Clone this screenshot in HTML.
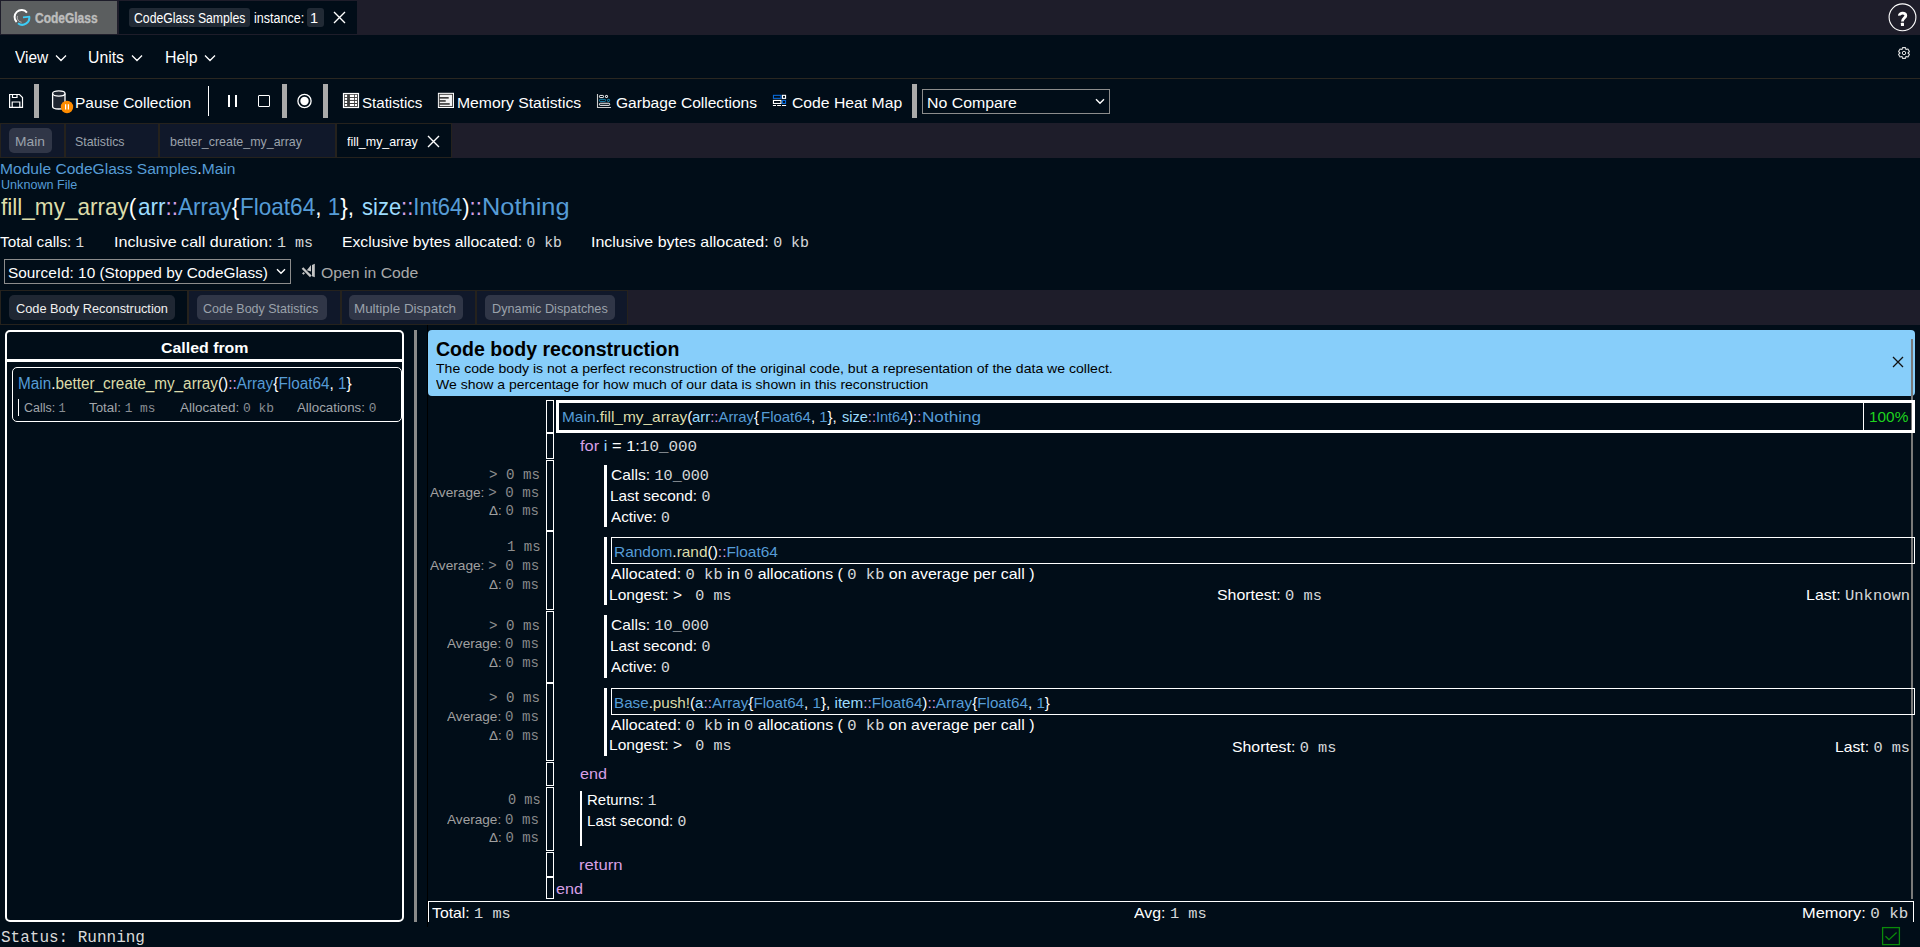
<!DOCTYPE html>
<html><head><meta charset="utf-8"><style>
*{box-sizing:border-box;margin:0;padding:0}
html,body{width:1920px;height:947px;overflow:hidden;background:#010d18;font-family:'Liberation Sans',sans-serif;color:#fff}
.a{position:absolute}
.t{position:absolute;white-space:pre;line-height:0;transform-origin:0 0}
.m{font-family:'Liberation Mono',monospace;opacity:.84}
</style></head><body>
<!-- title bar -->
<div class="a" style="left:0;top:0;width:1920px;height:35px;background:#1e1d2a"></div>
<div class="a" style="left:1px;top:1px;width:116px;height:33px;background:#5b5e5f"></div>
<svg class="a" style="left:12px;top:7px" width="20" height="20" viewBox="0 0 20 20"><path d="M14.95 5.55 A7 7 0 1 0 4.64 15" fill="none" stroke="#fff" stroke-width="2"/><path d="M5.49 8.86 A4.8 4.8 0 0 0 9.58 15.28" fill="none" stroke="#bbb" stroke-width="0.9"/><path d="M5.98 16.23 A7 7 0 0 0 17.2 9.5" fill="none" stroke="#3ccdf7" stroke-width="2"/><path d="M11 10.3 L18 9.6" stroke="#3ccdf7" stroke-width="1.8"/></svg>
<div class="a" style="left:119px;top:1px;width:238px;height:33px;background:#010d18"></div>
<div class="a" style="left:129px;top:8px;width:121px;height:19px;background:#212a35;border-radius:3px"></div>
<div class="a" style="left:307px;top:8px;width:17px;height:19px;background:#212a35;border-radius:3px"></div>
<svg class="a" style="left:333px;top:11px" width="13" height="13" viewBox="0 0 13 13"><path d="M1 1L12 12M12 1L1 12" stroke="#fff" stroke-width="1.4"/></svg>
<svg class="a" style="left:1887px;top:2px" width="31" height="31" viewBox="0 0 31 31"><circle cx="15.5" cy="15.3" r="13.4" fill="none" stroke="#fff" stroke-width="1.1"/><path d="M12.4 13.6C12.2 10.7 19 10.1 18.8 13.6C18.7 15.9 15.4 16.3 15.4 19.4" fill="none" stroke="#fff" stroke-width="2.8"/><rect x="13.9" y="20.7" width="3.1" height="3.2" rx="0.5" fill="#fff"/></svg>
<!-- menu -->
<div class="a" style="left:0;top:35px;width:1920px;height:43px;background:#010d18"></div>
<div class="a" style="left:0;top:78px;width:1920px;height:1px;background:#2a2721"></div>
<svg class="a" style="left:0;top:50px" width="220" height="16" viewBox="0 0 220 16"><path d="M56 5.5L61 10.5L66 5.5M132 5.5L137 10.5L142 5.5M205 5.5L210 10.5L215 5.5" fill="none" stroke="#fff" stroke-width="1.3"/></svg>
<svg class="a" style="left:1896px;top:45px" width="16" height="16" viewBox="0 0 16 16"><path d="M6.00 4.54 L6.55 2.59 L9.45 2.59 L10.00 4.54 L10.00 4.54 L11.96 4.04 L13.41 6.55 L12.00 8.00 L12.00 8.00 L13.41 9.45 L11.96 11.96 L10.00 11.46 L10.00 11.46 L9.45 13.41 L6.55 13.41 L6.00 11.46 L6.00 11.46 L4.04 11.96 L2.59 9.45 L4.00 8.00 L4.00 8.00 L2.59 6.55 L4.04 4.04 L6.00 4.54Z" fill="none" stroke="#e0e0e0" stroke-width="1.1" stroke-linejoin="round"/><circle cx="8" cy="8" r="1.7" fill="none" stroke="#e0e0e0" stroke-width="1"/></svg>
<!-- toolbar -->
<svg class="a" style="left:8px;top:93px" width="16" height="16" viewBox="0 0 16 16"><path d="M1.6 1.5H11.5L14.5 4.5V14.3H1.6Z M4.5 1.5V4.5H9V1.5 M4.2 14.3V9H11.8V14.3" fill="none" stroke="#fff" stroke-width="1.2"/></svg>
<div class="a" style="left:34px;top:84px;width:5px;height:34px;background:#aaaaaa"></div>
<svg class="a" style="left:51px;top:89px" width="24" height="26" viewBox="0 0 24 26"><path d="M1.6 4.5V17.5C1.6 19 4 20 7.8 20C11.5 20 14 19 14 17.5V4.5" fill="#1e2530" stroke="#fff" stroke-width="1.3"/><ellipse cx="7.8" cy="4.5" rx="6.2" ry="2.6" fill="#1e2530" stroke="#fff" stroke-width="1.3"/><circle cx="16" cy="18" r="6.2" fill="#ff8c00"/><path d="M14.6 15.2V20.6M17.4 15.2V20.6" stroke="#fff" stroke-width="1.2"/></svg>
<div class="a" style="left:208px;top:86px;width:1px;height:30px;background:#fff"></div>
<div class="a" style="left:228px;top:95px;width:2px;height:12px;background:#fff"></div>
<div class="a" style="left:235px;top:95px;width:2px;height:12px;background:#fff"></div>
<div class="a" style="left:257.5px;top:95px;width:12.5px;height:12px;border:1.5px solid #fff;border-radius:1px"></div>
<div class="a" style="left:282px;top:84px;width:5px;height:34px;background:#aaaaaa"></div>
<svg class="a" style="left:296px;top:93px" width="17" height="16" viewBox="0 0 17 16"><circle cx="8.5" cy="8" r="6.6" fill="none" stroke="#fff" stroke-width="1.3"/><circle cx="8.5" cy="8" r="4.2" fill="#fff"/></svg>
<div class="a" style="left:323px;top:84px;width:5px;height:34px;background:#aaaaaa"></div>
<svg class="a" style="left:342px;top:92px" width="18" height="17" viewBox="0 0 18 17"><rect x="1.5" y="1.5" width="15" height="14" fill="#3a3a3a" stroke="#fff" stroke-width="1.2"/><rect x="2.8" y="2.8" width="2.3" height="2.2" fill="#fff"/><rect x="7.9" y="2.8" width="4.1" height="2.2" fill="#fff"/><rect x="12.8" y="2.8" width="2.2" height="2.2" fill="#fff"/><rect x="2.8" y="5.9" width="2.3" height="2.0" fill="#fff"/><rect x="7.9" y="5.9" width="4.1" height="2.0" fill="#fff"/><rect x="12.8" y="5.9" width="2.2" height="2.0" fill="#fff"/><rect x="2.8" y="8.9" width="2.3" height="2.1" fill="#fff"/><rect x="7.9" y="8.9" width="4.1" height="2.1" fill="#fff"/><rect x="12.8" y="8.9" width="2.2" height="2.1" fill="#fff"/><rect x="2.8" y="12" width="2.3" height="2.0" fill="#fff"/><rect x="7.9" y="12" width="4.1" height="2.0" fill="#fff"/><rect x="12.8" y="12" width="2.2" height="2.0" fill="#fff"/></svg>
<svg class="a" style="left:437px;top:92px" width="18" height="17" viewBox="0 0 18 17"><rect x="0.9" y="0.8" width="16.1" height="15.2" fill="#fff"/><rect x="2.3" y="2.3" width="13.3" height="12.2" fill="#f2f2f2" stroke="#333" stroke-width="0.9"/><rect x="2.4" y="5.1" width="9.3" height="1.5" fill="#2a2a2a"/><rect x="2.4" y="8.2" width="6.3" height="1.5" fill="#2a2a2a"/><rect x="2.4" y="11.2" width="10.3" height="1.5" fill="#2a2a2a"/></svg>
<svg class="a" style="left:596px;top:93px" width="16" height="16" viewBox="0 0 16 16"><path d="M1.5 1V14.5H15" fill="none" stroke="#ccc" stroke-width="1.1"/><g fill="none" stroke-width="0.95"><rect x="3.45" y="2.45" width="4.1" height="2.1" rx="0.7" stroke="#fff"/><rect x="9.45" y="2.45" width="2.1" height="2.1" rx="0.6" stroke="#fff"/><rect x="3.45" y="6.35" width="6.1" height="2.1" rx="0.7" stroke="#1a8ab4"/><rect x="11.45" y="6.35" width="2.2" height="2.1" rx="0.6" stroke="#1a8ab4"/><rect x="3.45" y="10.25" width="10.2" height="2.1" rx="0.7" stroke="#fff"/></g></svg>
<svg class="a" style="left:772px;top:94px" width="15" height="14" viewBox="0 0 15 14"><g fill="none" stroke-width="1.1"><rect x="1.45" y="1.35" width="7.5" height="3" stroke="#0a6ad8"/><rect x="10.45" y="1.35" width="3.1" height="3" stroke="#fff"/><rect x="1.45" y="6.45" width="7.5" height="3" stroke="#fff"/><rect x="10.45" y="6.45" width="3.1" height="3" stroke="#0a6ad8"/><path d="M0.9 11.5H4M5.1 11.5H8.9M10 11.5H14.1" stroke="#fff"/></g></svg>
<div class="a" style="left:912px;top:84px;width:5px;height:34px;background:#aaaaaa"></div>
<div class="a" style="left:922px;top:89px;width:188px;height:25px;border:1px solid #8c8c8c"></div>
<svg class="a" style="left:1094px;top:97px" width="12" height="9" viewBox="0 0 12 9"><path d="M2 2.2L6 6.2L10 2.2" fill="none" stroke="#fff" stroke-width="1.4"/></svg>
<!-- tab row -->
<div class="a" style="left:0;top:123px;width:1920px;height:35px;background:#1e1d2a"></div>
<div class="a" style="left:0;top:123px;width:452px;height:35px;background:#25221d"></div>
<div class="a" style="left:1px;top:124px;width:63px;height:33px;background:#10182a"></div>
<div class="a" style="left:66px;top:124px;width:92px;height:33px;background:#10182a"></div>
<div class="a" style="left:160px;top:124px;width:175px;height:33px;background:#10182a"></div>
<div class="a" style="left:337px;top:124px;width:114px;height:33px;background:#010d18"></div>
<div class="a" style="left:9px;top:128px;width:43px;height:25px;background:#303647;border-radius:5px"></div>
<svg class="a" style="left:427px;top:135px" width="13" height="13" viewBox="0 0 13 13"><path d="M1 1L12 12M12 1L1 12" stroke="#fff" stroke-width="1.4"/></svg>
<!-- header -->
<div class="a" style="left:3.5px;top:259px;width:287px;height:25px;border:1px solid #8c8c8c"></div>
<svg class="a" style="left:275px;top:267px" width="12" height="9" viewBox="0 0 12 9"><path d="M2 2.2L6 6.2L10 2.2" fill="none" stroke="#fff" stroke-width="1.4"/></svg>
<svg class="a" style="left:301px;top:263px" width="16" height="16" viewBox="0 0 16 16"><path d="M1.5 5 L9.8 13.4" stroke="#c4c4c4" stroke-width="2.3"/><path d="M1 10.5L2.5 9L4 10.3L2.5 11.8Z M5.8 7.2L10 2L10 8.5Z M11 2L13.8 0.8V14.3L11 13.2Z" fill="#c4c4c4"/></svg>
<!-- subtabs -->
<div class="a" style="left:0;top:290px;width:1920px;height:35px;background:#1e1d2a"></div>
<div class="a" style="left:0;top:290px;width:628px;height:35px;background:#25221d"></div>
<div class="a" style="left:1px;top:291px;width:186px;height:33px;background:#010d18"></div>
<div class="a" style="left:189px;top:291px;width:151px;height:33px;background:#10182a"></div>
<div class="a" style="left:342px;top:291px;width:133px;height:33px;background:#10182a"></div>
<div class="a" style="left:477px;top:291px;width:150px;height:33px;background:#10182a"></div>
<div class="a" style="left:9px;top:295px;width:166px;height:25px;background:#1f2733;border-radius:5px"></div>
<div class="a" style="left:197px;top:295px;width:130px;height:25px;background:#303647;border-radius:5px"></div>
<div class="a" style="left:349px;top:295px;width:114px;height:25px;background:#303647;border-radius:5px"></div>
<div class="a" style="left:485px;top:295px;width:130px;height:25px;background:#303647;border-radius:5px"></div>
<!-- called from panel -->
<div class="a" style="left:5px;top:330px;width:399px;height:592px;border:2px solid #fff;border-radius:5px"></div>
<div class="a" style="left:7px;top:359px;width:395px;height:3px;background:#fff"></div>
<div class="a" style="left:12px;top:367px;width:390px;height:55px;border:1.5px solid #fff;border-radius:5px"></div>
<div class="a" style="left:17.7px;top:399px;width:1.5px;height:17px;background:#fff"></div>
<div class="a" style="left:414px;top:330px;width:3px;height:592px;background:#8a8a8a"></div>
<!-- code panel -->
<div class="a" style="left:427px;top:325px;width:1px;height:602px;background:#000"></div>
<div class="a" style="left:428px;top:330px;width:1487px;height:66px;background:#87cefa;border-radius:4px"></div>
<svg class="a" style="left:1891px;top:355px" width="14" height="14" viewBox="0 0 14 14"><path d="M2 2L12 12M12 2L2 12" stroke="#111" stroke-width="1.3"/></svg>
<div class="a" style="left:1911px;top:339px;width:1.5px;height:560px;background:#7a7a7a"></div>
<!-- gutter boxes -->
<div class="a" style="left:546px;top:400px;width:8px;height:33px;border:1.3px solid #fff"></div>
<div class="a" style="left:546px;top:433px;width:8px;height:26px;border:1.3px solid #fff"></div>
<div class="a" style="left:546px;top:460px;width:8px;height:71px;border:1.3px solid #fff"></div>
<div class="a" style="left:546px;top:531px;width:8px;height:79px;border:1.3px solid #fff"></div>
<div class="a" style="left:546px;top:611px;width:8px;height:72px;border:1.3px solid #fff"></div>
<div class="a" style="left:546px;top:683px;width:8px;height:78px;border:1.3px solid #fff"></div>
<div class="a" style="left:546px;top:762px;width:8px;height:24px;border:1.3px solid #fff"></div>
<div class="a" style="left:546px;top:787px;width:8px;height:64px;border:1.3px solid #fff"></div>
<div class="a" style="left:546px;top:852px;width:8px;height:25px;border:1.3px solid #fff"></div>
<div class="a" style="left:546px;top:877px;width:8px;height:22px;border:1.3px solid #fff"></div>
<!-- signature box -->
<div class="a" style="left:556px;top:400px;width:1359px;height:33px;border:3px solid #fff"></div>
<div class="a" style="left:1862.5px;top:403px;width:1px;height:27px;background:#fff"></div>
<!-- bars & boxes -->
<div class="a" style="left:604px;top:465px;width:2.5px;height:62px;background:#fff"></div>
<div class="a" style="left:604px;top:537px;width:2.5px;height:68px;background:#fff"></div>
<div class="a" style="left:611px;top:537px;width:1304px;height:27px;border:1.3px solid #fff"></div>
<div class="a" style="left:604px;top:615px;width:2.5px;height:63px;background:#fff"></div>
<div class="a" style="left:604px;top:688px;width:2.5px;height:68px;background:#fff"></div>
<div class="a" style="left:611px;top:688px;width:1304px;height:27px;border:1.3px solid #fff"></div>
<div class="a" style="left:579.5px;top:791px;width:2.5px;height:55px;background:#fff"></div>
<!-- summary bar -->
<div class="a" style="left:428px;top:901px;width:1486px;height:21px;border:1.3px solid #fff;border-bottom:none"></div>
<svg class="a" style="left:1881px;top:926px" width="20" height="20" viewBox="0 0 20 20"><rect x="1.6" y="1.6" width="16.8" height="17" fill="none" stroke="#0a8a0a" stroke-width="1.3"/><path d="M4.5 10.2L8 13.6L15.6 6.5" fill="none" stroke="#0a8a0a" stroke-width="1.3"/></svg>

<div class="t" id="t0" style="left:35.00px;top:17.72px;font-size:14.5px;color:#bdbdbd;font-weight:bold;transform:scaleX(0.8267);-webkit-text-stroke:0.4px #bdbdbd;">CodeGlass</div>
<div class="t" id="t1" style="left:133.50px;top:17.90px;font-size:14px;color:#ffffff;transform:scaleX(0.8736);">CodeGlass Samples</div>
<div class="t" id="t2" style="left:253.51px;top:17.90px;font-size:14px;color:#ffffff;transform:scaleX(0.8967);">instance:</div>
<div class="t" id="t3" style="left:309.79px;top:17.90px;font-size:14px;color:#ffffff;transform:scaleX(1.0401);">1</div>
<div class="t" id="t4" style="left:15.00px;top:57.77px;font-size:16px;color:#ffffff;transform:scaleX(0.9663);">View</div>
<div class="t" id="t5" style="left:88.20px;top:57.77px;font-size:16px;color:#ffffff;transform:scaleX(0.9861);">Units</div>
<div class="t" id="t6" style="left:164.81px;top:57.77px;font-size:16px;color:#ffffff;transform:scaleX(0.9923);">Help</div>
<div class="t" id="t7" style="left:75.49px;top:102.50px;font-size:15.5px;color:#ffffff;transform:scaleX(0.9987);">Pause Collection</div>
<div class="t" id="t8" style="left:362.00px;top:102.50px;font-size:15.5px;color:#ffffff;transform:scaleX(0.9742);">Statistics</div>
<div class="t" id="t9" style="left:456.80px;top:102.50px;font-size:15.5px;color:#ffffff;transform:scaleX(1.0150);">Memory Statistics</div>
<div class="t" id="t10" style="left:616.00px;top:102.50px;font-size:15.5px;color:#ffffff;transform:scaleX(1.0042);">Garbage Collections</div>
<div class="t" id="t11" style="left:791.80px;top:102.50px;font-size:15.5px;color:#ffffff;transform:scaleX(1.0147);">Code Heat Map</div>
<div class="t" id="t12" style="left:927.00px;top:102.50px;font-size:15.5px;color:#ffffff;transform:scaleX(1.0236);">No Compare</div>
<div class="t" id="t13" style="left:15.44px;top:142.26px;font-size:13.5px;color:#9ba2ab;transform:scaleX(1.0204);">Main</div>
<div class="t" id="t14" style="left:75.25px;top:142.26px;font-size:13.5px;color:#9ba2ab;transform:scaleX(0.9164);">Statistics</div>
<div class="t" id="t15" style="left:170.25px;top:142.26px;font-size:13.5px;color:#9ba2ab;transform:scaleX(0.9210);">better_create_my_array</div>
<div class="t" id="t16" style="left:347.00px;top:142.26px;font-size:13.5px;color:#ffffff;transform:scaleX(0.9246);">fill_my_array</div>
<div class="t" id="t17" style="left:-0.51px;top:169.00px;font-size:15.5px;color:#ffffff;transform:scaleX(1.0046);"><span style="color:#569cd6">Module CodeGlass Samples</span>.<span style="color:#569cd6">Main</span></div>
<div class="t" id="t18" style="left:0.50px;top:184.76px;font-size:12px;color:#569cd6;transform:scaleX(1.0490);">Unknown File</div>
<div class="t" id="t19" style="left:0.50px;top:206.81px;font-size:24px;color:#ffffff;transform:scaleX(0.9399);"><span style="color:#dcdcaa">fill_my_array</span>(</div>
<div class="t" id="t20" style="left:138.00px;top:206.81px;font-size:24px;color:#ffffff;transform:scaleX(0.9364);"><span style="color:#9cdcfe">arr</span><span style="color:#d8a0e6">::</span><span style="color:#569cd6">Array</span>{</div>
<div class="t" id="t21" style="left:240.29px;top:206.81px;font-size:24px;color:#ffffff;transform:scaleX(0.9391);"><span style="color:#569cd6">Float64</span>, <span style="color:#569cd6">1</span>},</div>
<div class="t" id="t22" style="left:361.50px;top:206.81px;font-size:24px;color:#ffffff;transform:scaleX(0.9163);"><span style="color:#9cdcfe">size</span><span style="color:#d8a0e6">::</span><span style="color:#569cd6">Int64</span>)<span style="color:#d8a0e6">::</span></div>
<div class="t" id="t23" style="left:482.44px;top:206.81px;font-size:24px;color:#ffffff;transform:scaleX(1.0585);"><span style="color:#569cd6">Nothing</span></div>
<div class="t" id="t24" style="left:0.00px;top:241.81px;font-size:15px;color:#ffffff;transform:scaleX(1.0184);">Total calls: <span class="m" style="font-size:14px">1</span></div>
<div class="t" id="t25" style="left:114.20px;top:241.81px;font-size:15px;color:#ffffff;transform:scaleX(1.0734);">Inclusive call duration: <span class="m" style="font-size:14px">1 ms</span></div>
<div class="t" id="t26" style="left:341.90px;top:241.81px;font-size:15px;color:#ffffff;transform:scaleX(1.0492);">Exclusive bytes allocated: <span class="m" style="font-size:14px">0 kb</span></div>
<div class="t" id="t27" style="left:591.00px;top:241.81px;font-size:15px;color:#ffffff;transform:scaleX(1.0656);">Inclusive bytes allocated: <span class="m" style="font-size:14px">0 kb</span></div>
<div class="t" id="t28" style="left:8.00px;top:273.20px;font-size:15.5px;color:#ffffff;transform:scaleX(0.9923);">SourceId: 10 (Stopped by CodeGlass)</div>
<div class="t" id="t29" style="left:320.81px;top:273.20px;font-size:15.5px;color:#a9a9a9;transform:scaleX(1.0178);">Open in Code</div>
<div class="t" id="t30" style="left:16.00px;top:309.31px;font-size:13.5px;color:#f0f0f0;transform:scaleX(0.9463);">Code Body Reconstruction</div>
<div class="t" id="t31" style="left:203.25px;top:309.31px;font-size:13.5px;color:#9ba2ab;transform:scaleX(0.9253);">Code Body Statistics</div>
<div class="t" id="t32" style="left:354.49px;top:309.31px;font-size:13.5px;color:#9ba2ab;transform:scaleX(0.9928);">Multiple Dispatch</div>
<div class="t" id="t33" style="left:491.50px;top:309.31px;font-size:13.5px;color:#9ba2ab;transform:scaleX(0.9408);">Dynamic Dispatches</div>
<div class="t" id="t34" style="left:160.50px;top:348.30px;font-size:15.5px;color:#ffffff;font-weight:bold;transform:scaleX(1.0258);">Called from</div>
<div class="t" id="t35" style="left:17.50px;top:384.02px;font-size:16px;color:#ffffff;transform:scaleX(0.9569);"><span style="color:#569cd6">Main</span>.<span style="color:#dcdcaa">better_create_my_array</span>()<span style="color:#d8a0e6">::</span><span style="color:#569cd6">Array</span>{<span style="color:#569cd6">Float64</span>, <span style="color:#569cd6">1</span>}</div>
<div class="t" id="t36" style="left:24.00px;top:407.80px;font-size:12.5px;color:#a2a6ab;transform:scaleX(0.9954);">Calls: <span class="m" style="font-size:12px">1</span></div>
<div class="t" id="t37" style="left:89.20px;top:407.80px;font-size:12.5px;color:#a2a6ab;transform:scaleX(1.0697);">Total: <span class="m" style="font-size:12px">1 ms</span></div>
<div class="t" id="t38" style="left:179.80px;top:407.80px;font-size:12.5px;color:#a2a6ab;transform:scaleX(1.0783);">Allocated: <span class="m" style="font-size:12px">0 kb</span></div>
<div class="t" id="t39" style="left:297.00px;top:407.80px;font-size:12.5px;color:#a2a6ab;transform:scaleX(1.0629);">Allocations: <span class="m" style="font-size:12px">0</span></div>
<div class="t" id="t40" style="left:435.80px;top:348.61px;font-size:20px;color:#000;font-weight:bold;transform:scaleX(0.9778);">Code body reconstruction</div>
<div class="t" id="t41" style="left:435.50px;top:368.51px;font-size:13.5px;color:#000;transform:scaleX(1.0413);">The code body is not a perfect reconstruction of the original code, but a representation of the data we collect.</div>
<div class="t" id="t42" style="left:435.50px;top:384.51px;font-size:13.5px;color:#000;transform:scaleX(1.0371);">We show a percentage for how much of our data is shown in this reconstruction</div>
<div class="t" id="t43" style="left:561.50px;top:416.91px;font-size:15px;color:#ffffff;transform:scaleX(1.0293);"><span style="color:#569cd6">Main</span>.<span style="color:#dcdcaa">fill_my_array</span>(</div>
<div class="t" id="t44" style="left:691.89px;top:416.91px;font-size:15px;color:#ffffff;transform:scaleX(0.9921);"><span style="color:#9cdcfe">arr</span><span style="color:#d8a0e6">::</span><span style="color:#569cd6">Array</span>{</div>
<div class="t" id="t45" style="left:760.74px;top:416.91px;font-size:15px;color:#ffffff;transform:scaleX(0.9966);"><span style="color:#569cd6">Float64</span>, <span style="color:#569cd6">1</span>},</div>
<div class="t" id="t46" style="left:841.70px;top:416.91px;font-size:15px;color:#ffffff;transform:scaleX(0.9685);"><span style="color:#9cdcfe">size</span><span style="color:#d8a0e6">::</span><span style="color:#569cd6">Int64</span>)<span style="color:#d8a0e6">::</span></div>
<div class="t" id="t47" style="left:921.98px;top:416.91px;font-size:15px;color:#ffffff;transform:scaleX(1.1420);"><span style="color:#569cd6">Nothing</span></div>
<div class="t" id="t48" style="left:1869.08px;top:416.91px;font-size:15px;color:#1ed41e;transform:scaleX(1.0251);">100%</div>
<div class="t" id="t49" style="left:580.00px;top:445.61px;font-size:15px;color:#ffffff;transform:scaleX(1.0957);"><span style="color:#d8a0e6">for</span> <span style="color:#9cdcfe">i</span> = 1:<span class="m" style="font-size:14.5px">10_000</span></div>
<div class="t" id="t50" style="left:611.00px;top:474.70px;font-size:15px;color:#ffffff;transform:scaleX(1.0429);">Calls: <span class="m" style="font-size:14.5px">10_000</span></div>
<div class="t" id="t51" style="left:609.99px;top:495.70px;font-size:15px;color:#ffffff;transform:scaleX(1.0244);">Last second: <span class="m" style="font-size:14.5px">0</span></div>
<div class="t" id="t52" style="left:611.00px;top:516.70px;font-size:15px;color:#ffffff;transform:scaleX(1.0180);">Active: <span class="m" style="font-size:14.5px">0</span></div>
<div class="t" id="t53" style="left:614.00px;top:552.20px;font-size:15px;color:#ffffff;transform:scaleX(1.0291);"><span style="color:#569cd6">Random</span>.<span style="color:#dcdcaa">rand</span>()<span style="color:#d8a0e6">::</span><span style="color:#569cd6">Float64</span></div>
<div class="t" id="t54" style="left:610.50px;top:574.11px;font-size:15px;color:#ffffff;transform:scaleX(1.0648);">Allocated: <span class="m" style="font-size:14.5px">0 kb</span> in <span class="m" style="font-size:14.5px">0</span> allocations ( <span class="m" style="font-size:14.5px">0 kb</span> on average per call )</div>
<div class="t" id="t55" style="left:609.49px;top:594.81px;font-size:15px;color:#ffffff;transform:scaleX(1.0361);">Longest: &gt; <span class="m" style="font-size:14.5px"> 0 ms</span></div>
<div class="t" id="t56" style="left:1217.00px;top:595.00px;font-size:15px;color:#ffffff;transform:scaleX(1.0600);">Shortest: <span class="m" style="font-size:14.5px">0 ms</span></div>
<div class="t" id="t57" style="left:1806.49px;top:595.00px;font-size:15px;color:#ffffff;transform:scaleX(1.0651);">Last: <span class="m" style="font-size:14.5px">Unknown</span></div>
<div class="t" id="t58" style="left:611.00px;top:625.31px;font-size:15px;color:#ffffff;transform:scaleX(1.0429);">Calls: <span class="m" style="font-size:14.5px">10_000</span></div>
<div class="t" id="t59" style="left:609.99px;top:646.31px;font-size:15px;color:#ffffff;transform:scaleX(1.0244);">Last second: <span class="m" style="font-size:14.5px">0</span></div>
<div class="t" id="t60" style="left:611.00px;top:667.31px;font-size:15px;color:#ffffff;transform:scaleX(1.0180);">Active: <span class="m" style="font-size:14.5px">0</span></div>
<div class="t" id="t61" style="left:614.00px;top:702.75px;font-size:15px;color:#ffffff;transform:scaleX(1.0128);"><span style="color:#569cd6">Base</span>.<span style="color:#dcdcaa">push!</span>(<span style="color:#9cdcfe">a</span><span style="color:#d8a0e6">::</span><span style="color:#569cd6">Array</span>{<span style="color:#569cd6">Float64</span>, <span style="color:#569cd6">1</span>}, <span style="color:#9cdcfe">item</span><span style="color:#d8a0e6">::</span><span style="color:#569cd6">Float64</span>)<span style="color:#d8a0e6">::</span><span style="color:#569cd6">Array</span>{<span style="color:#569cd6">Float64</span>, <span style="color:#569cd6">1</span>}</div>
<div class="t" id="t62" style="left:610.50px;top:724.70px;font-size:15px;color:#ffffff;transform:scaleX(1.0648);">Allocated: <span class="m" style="font-size:14.5px">0 kb</span> in <span class="m" style="font-size:14.5px">0</span> allocations ( <span class="m" style="font-size:14.5px">0 kb</span> on average per call )</div>
<div class="t" id="t63" style="left:609.49px;top:745.31px;font-size:15px;color:#ffffff;transform:scaleX(1.0361);">Longest: &gt; <span class="m" style="font-size:14.5px"> 0 ms</span></div>
<div class="t" id="t64" style="left:1231.50px;top:746.50px;font-size:15px;color:#ffffff;transform:scaleX(1.0549);">Shortest: <span class="m" style="font-size:14.5px">0 ms</span></div>
<div class="t" id="t65" style="left:1834.99px;top:746.50px;font-size:15px;color:#ffffff;transform:scaleX(1.0484);">Last: <span class="m" style="font-size:14.5px">0 ms</span></div>
<div class="t" id="t66" style="left:580.00px;top:774.41px;font-size:15px;color:#d8a0e6;transform:scaleX(1.0774);">end</div>
<div class="t" id="t67" style="left:586.50px;top:800.31px;font-size:15px;color:#ffffff;transform:scaleX(0.9977);">Returns: <span class="m" style="font-size:14.5px">1</span></div>
<div class="t" id="t68" style="left:586.50px;top:821.31px;font-size:15px;color:#ffffff;transform:scaleX(1.0151);">Last second: <span class="m" style="font-size:14.5px">0</span></div>
<div class="t" id="t69" style="left:578.89px;top:864.61px;font-size:15px;color:#d8a0e6;transform:scaleX(1.1127);">return</div>
<div class="t" id="t70" style="left:556.00px;top:889.41px;font-size:15px;color:#d8a0e6;transform:scaleX(1.0774);">end</div>
<div class="t" id="t71" style="left:432.25px;top:912.81px;font-size:15px;color:#ffffff;transform:scaleX(1.0515);">Total: <span class="m" style="font-size:14.5px">1 ms</span></div>
<div class="t" id="t72" style="left:1134.00px;top:912.81px;font-size:15px;color:#ffffff;transform:scaleX(1.0586);">Avg: <span class="m" style="font-size:14.5px">1 ms</span></div>
<div class="t" id="t73" style="left:1801.60px;top:913.00px;font-size:15px;color:#ffffff;transform:scaleX(1.0931);">Memory: <span class="m" style="font-size:14.5px">0 kb</span></div>
<div class="t" id="t74" style="left:1.00px;top:937.52px;font-size:16px;color:#dadada;font-family:'Liberation Mono',monospace;transform:scaleX(0.9995);">Status: Running</div>
<div class="t" id="t75" style="left:489.19px;top:474.81px;font-size:14px;color:#8e8e8e;font-family:'Liberation Mono',monospace;transform:scaleX(1.0106);">&gt; 0 ms</div>
<div class="t" id="t76" style="left:429.90px;top:492.61px;font-size:13.5px;color:#a0a0a0;transform:scaleX(1.0116);">Average: <span class="m" style="font-size:14px">&gt; 0 ms</span></div>
<div class="t" id="t77" style="left:489.25px;top:511.40px;font-size:13.5px;color:#a0a0a0;transform:scaleX(0.9944);">Δ: <span class="m" style="font-size:14px">0 ms</span></div>
<div class="t" id="t78" style="left:506.58px;top:546.60px;font-size:14px;color:#8e8e8e;font-family:'Liberation Mono',monospace;transform:scaleX(0.9986);">1 ms</div>
<div class="t" id="t79" style="left:429.90px;top:565.76px;font-size:13.5px;color:#a0a0a0;transform:scaleX(1.0116);">Average: <span class="m" style="font-size:14px">&gt; 0 ms</span></div>
<div class="t" id="t80" style="left:489.25px;top:584.51px;font-size:13.5px;color:#a0a0a0;transform:scaleX(0.9944);">Δ: <span class="m" style="font-size:14px">0 ms</span></div>
<div class="t" id="t81" style="left:489.19px;top:625.81px;font-size:14px;color:#8e8e8e;font-family:'Liberation Mono',monospace;transform:scaleX(1.0106);">&gt; 0 ms</div>
<div class="t" id="t82" style="left:447.25px;top:643.81px;font-size:13.5px;color:#a0a0a0;transform:scaleX(1.0078);">Average: <span class="m" style="font-size:14px">0 ms</span></div>
<div class="t" id="t83" style="left:489.25px;top:663.01px;font-size:13.5px;color:#a0a0a0;transform:scaleX(0.9944);">Δ: <span class="m" style="font-size:14px">0 ms</span></div>
<div class="t" id="t84" style="left:489.19px;top:697.60px;font-size:14px;color:#8e8e8e;font-family:'Liberation Mono',monospace;transform:scaleX(1.0106);">&gt; 0 ms</div>
<div class="t" id="t85" style="left:447.25px;top:716.70px;font-size:13.5px;color:#a0a0a0;transform:scaleX(1.0078);">Average: <span class="m" style="font-size:14px">0 ms</span></div>
<div class="t" id="t86" style="left:489.25px;top:735.61px;font-size:13.5px;color:#a0a0a0;transform:scaleX(0.9944);">Δ: <span class="m" style="font-size:14px">0 ms</span></div>
<div class="t" id="t87" style="left:507.60px;top:800.40px;font-size:14px;color:#8e8e8e;font-family:'Liberation Mono',monospace;transform:scaleX(0.9674);">0 ms</div>
<div class="t" id="t88" style="left:447.25px;top:820.01px;font-size:13.5px;color:#a0a0a0;transform:scaleX(1.0078);">Average: <span class="m" style="font-size:14px">0 ms</span></div>
<div class="t" id="t89" style="left:489.25px;top:837.51px;font-size:13.5px;color:#a0a0a0;transform:scaleX(0.9944);">Δ: <span class="m" style="font-size:14px">0 ms</span></div>
</body></html>
